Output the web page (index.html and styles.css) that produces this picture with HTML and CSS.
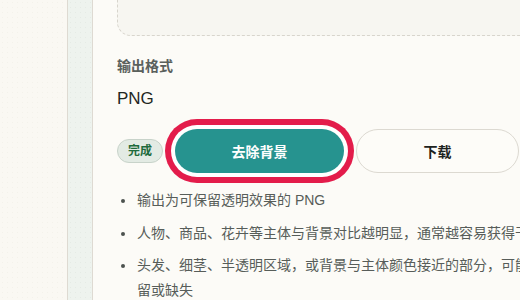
FILE: index.html
```html
<!DOCTYPE html>
<html lang="zh-CN">
<head>
<meta charset="utf-8">
<title>去除背景</title>
<link rel="stylesheet" href="styles.css">
</head>
<body>
<div class="page">
  <div class="gutter"></div>
  <div class="rail"></div>
  <main class="main">
    <div class="drop"></div>
    <section class="field">
      <div class="field-label">输出格式</div>
      <div class="field-value">PNG</div>
    </section>
    <div class="actions">
      <span class="badge">完成</span>
      <button class="btn btn-primary" type="button">去除背景</button>
      <button class="btn btn-secondary" type="button">下载</button>
    </div>
    <ul class="notes">
      <li>输出为可保留透明效果的 PNG</li>
      <li>人物、商品、花卉等主体与背景对比越明显，通常越容易获得干净结果</li>
      <li>头发、细茎、半透明区域，或背景与主体颜色接近的部分，可能会有残留或缺失</li>
    </ul>
  </main>
</div>
</body>
</html>
```
FILE: styles.css
```css
html, body {
  margin: 0;
  padding: 0;
  overflow: hidden;
}
body {
  background: #fcfbf7;
  font-family: "Liberation Sans", "Noto Sans CJK SC", sans-serif;
  color: #1f2723;
}
.page {
  display: flex;
  min-height: 300px;
  width: 640px;
}
.gutter {
  flex: none;
  width: 67px;
  background-color: #faf8f3;
  background-image: radial-gradient(circle, rgba(180, 170, 150, 0.08) 0.6px, transparent 0.9px);
  background-size: 5px 5px;
}
.rail {
  flex: none;
  width: 24px;
  border-left: 1px solid #dedad2;
  border-right: 1px solid #dedad2;
  background-color: #eef3ee;
  background-image: radial-gradient(circle, rgba(150, 170, 155, 0.1) 0.6px, transparent 0.9px);
  background-size: 5px 5px;
}
.main {
  flex: none;
  width: 460px;
  padding-left: 24px;
  background: #fcfbf7;
}
.drop {
  margin-top: -60px;
  height: 94px;
  border: 1px dashed #d8d5cd;
  border-radius: 14px;
  background: #f7f6f1;
  width: 600px;
}
.field {
  margin-top: 20px;
}
.field-label {
  font-size: 14px;
  line-height: 20px;
  font-weight: 700;
  color: #5a605c;
}
.field-value {
  margin-top: 11px;
  font-size: 17px;
  line-height: 24px;
  color: #1f2723;
}
.actions {
  margin-top: 18px;
  display: flex;
  align-items: center;
  gap: 12px;
}
.badge {
  flex: none;
  box-sizing: border-box;
  height: 24px;
  padding: 0 10px;
  border: 1px solid #c8d3ca;
  border-radius: 12px;
  background: #e3ebe4;
  color: #1f6b3d;
  font-size: 12px;
  font-weight: 700;
  line-height: 22px;
}
.btn {
  flex: none;
  box-sizing: border-box;
  height: 44px;
  border-radius: 22px;
  font-family: inherit;
  font-size: 14px;
  font-weight: 700;
  padding: 0;
  cursor: pointer;
}
.btn-primary {
  width: 169px;
  border: none;
  background: #26938f;
  color: #ffffff;
  box-shadow: 0 0 0 4px #ffffff, 0 0 0 10px #e31c4b;
}
.btn-secondary {
  width: 163px;
  border: 1px solid #dcd9d1;
  background: #fdfcf8;
  color: #1d2320;
}
.notes {
  list-style: none;
  margin: 15px 0 0 0;
  padding: 0;
  width: 460px;
}
.notes li {
  display: flex;
  font-size: 14px;
  line-height: 25px;
  color: #575d59;
}
.notes li + li {
  margin-top: 7.5px;
}
.notes li::before {
  content: "";
  flex: none;
  width: 4px;
  height: 4px;
  border-radius: 50%;
  background: #4c524f;
  margin: 11px 12px 0 4px;
}
```
